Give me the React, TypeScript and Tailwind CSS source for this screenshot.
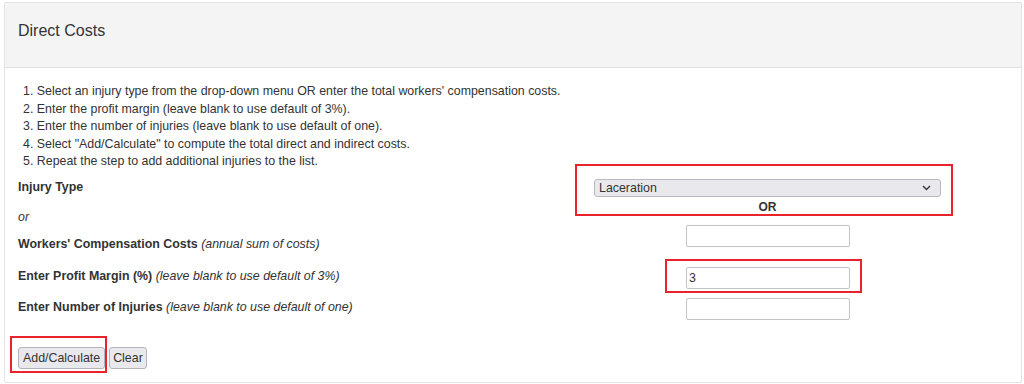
const steps = [
  "Select an injury type from the drop-down menu OR enter the total workers' compensation costs.",
  "Enter the profit margin (leave blank to use default of 3%).",
  "Enter the number of injuries (leave blank to use default of one).",
  'Select "Add/Calculate" to compute the total direct and indirect costs.',
  "Repeat the step to add additional injuries to the list.",
];

function Annotation({ className }: { className: string }) {
  // red highlight box drawn over the screenshot
  return <div className={`absolute border-2 border-[#e8232b] pointer-events-none ${className}`}></div>;
}

export default function App() {
  return (
    <div className="w-[1024px] h-[384px] bg-white pt-[2px] pl-[4px] font-['Liberation_Sans',Arial,sans-serif] text-[#333]">
      <div className="w-[1018px] h-[381px] border border-[#e3e3e3] rounded-[2px] flex flex-col">
        <div className="h-[65px] bg-[#f4f4f4] border-b border-[#e0e0e0] pl-[13px] pt-[17px]">
          <h2 className="text-[16px] leading-[22px]">Direct Costs</h2>
        </div>

        <div className="px-[13px] pt-[15px] pb-[12px] text-[12.4px]">
          <ol className="pl-[5px] leading-[17.5px]">
            {steps.map((s, i) => (
              <li key={i}>
                {i + 1}. {s}
              </li>
            ))}
          </ol>

          <div className="flex -mt-[2px]">
            <div className="w-[576px] leading-[18px]">
              <div className="mt-[9px] font-bold">Injury Type</div>
              <div className="mt-[12px] italic">or</div>
              <div className="mt-[9px]">
                <span className="font-bold">Workers' Compensation Costs</span>{" "}
                <span className="italic">(annual sum of costs)</span>
              </div>
              <div className="mt-[14px]">
                <span className="font-bold">Enter Profit Margin (%)</span>{" "}
                <span className="italic">(leave blank to use default of 3%)</span>
              </div>
              <div className="mt-[13px]">
                <span className="font-bold">Enter Number of Injuries</span>{" "}
                <span className="italic">(leave blank to use default of one)</span>
              </div>
            </div>

            <div className="flex flex-col">
              <div className="relative mt-[10px] w-[347px]">
                <div className="h-[18px] bg-[#e9e9ed] border border-[#b9b9c1] rounded-[3px] flex items-center justify-between pl-[4px] pr-[9px]">
                  <span className="leading-[16px]">Laceration</span>
                  <svg width="9" height="6" viewBox="0 0 9 6" fill="none">
                    <path d="M1 1l3.5 3.5L8 1" stroke="#333" strokeWidth="1.4" />
                  </svg>
                </div>
                <div className="mt-[2px] text-center font-bold text-[12px] leading-[16px]">OR</div>
                <Annotation className="-left-[19px] -right-[12px] -top-[15px] -bottom-[1px]" />
              </div>

              <input className="mt-[10px] ml-[92px] w-[164px] h-[22px] border border-[#c3c3ca] rounded-[2px] px-[2px] outline-none" />

              <div className="relative mt-[20px] ml-[92px] w-[164px]">
                <input
                  defaultValue="3"
                  className="w-[164px] h-[22px] border border-[#c3c3ca] rounded-[2px] px-[2px] outline-none"
                />
                <Annotation className="-left-[21px] -right-[12px] -top-[8px] -bottom-[4px]" />
              </div>

              <input className="mt-[9px] ml-[92px] w-[164px] h-[22px] border border-[#c3c3ca] rounded-[2px] px-[2px] outline-none" />
            </div>
          </div>

          <div className="mt-[27px] flex gap-[4px]">
            <div className="relative">
              <button className="h-[22px] px-[4px] bg-[#e9e9ed] border border-[#b4b4bc] rounded-[3px] leading-[20px]">
                Add/Calculate
              </button>
              <Annotation className="-left-[8px] -right-[2px] -top-[11px] -bottom-[4px]" />
            </div>
            <button className="h-[22px] px-[3px] bg-[#e9e9ed] border border-[#b4b4bc] rounded-[3px] leading-[20px]">
              Clear
            </button>
          </div>
        </div>
      </div>
    </div>
  );
}
